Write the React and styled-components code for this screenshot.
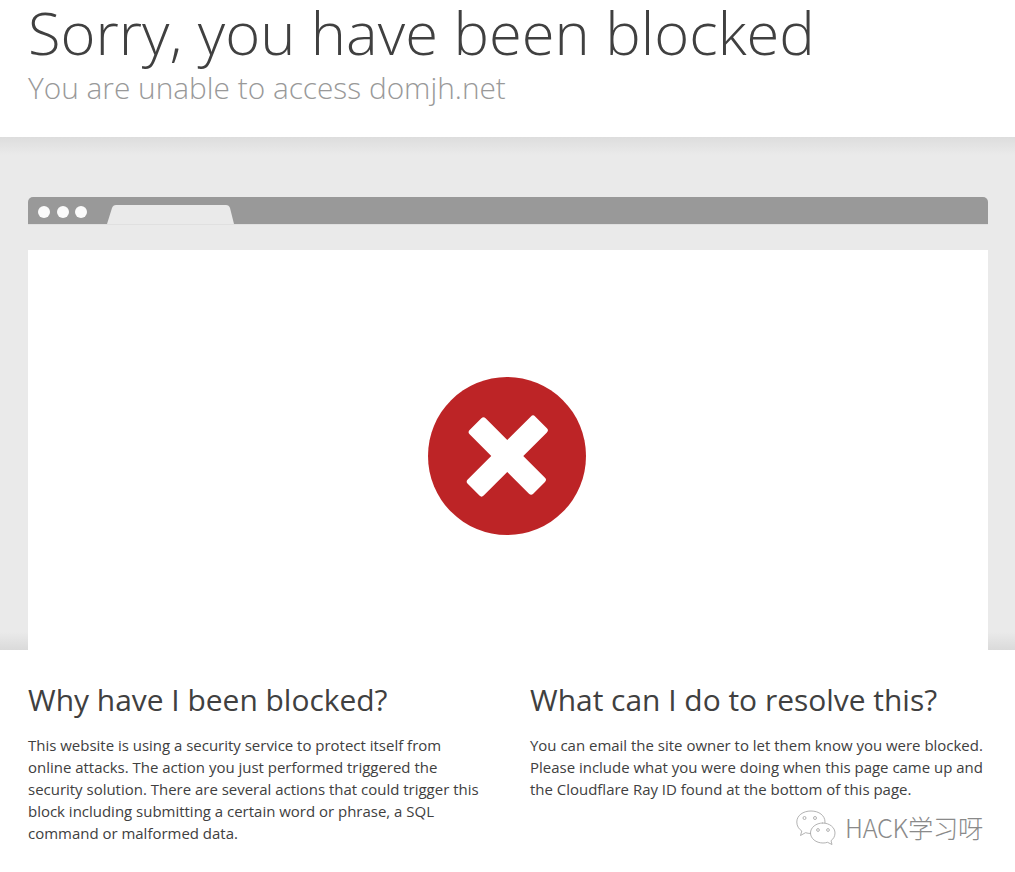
import React from "react";
import styled, { createGlobalStyle } from "styled-components";

const Global = createGlobalStyle`
  html, body { margin: 0; padding: 0; background: #fff; }
  body { font-family: "Open Sans", "Liberation Sans", sans-serif; color: #404040; overflow: hidden; }
`;
const Page = styled.div`
  position: relative;
  width: 1015px;
  height: 872px;
  overflow: hidden;
`;
const Header = styled.header`
  height: 137px;
  padding: 0 28px;
  box-sizing: border-box;
  background: #fff;
`;
const Title = styled.h1`
  margin: 0;
  font-size: 59.7px;
  line-height: 64px;
  font-weight: 300;
  color: #404040;
`;
const Subtitle = styled.h2`
  margin: 6px 0 0;
  font-size: 29.82px;
  line-height: 36px;
  font-weight: 300;
  color: #999;
`;
const Band = styled.section`
  height: 513px;
  padding: 60px 27px 0 28px;
  box-sizing: border-box;
  background:
    linear-gradient(#dddddd, #eaeaea 18px) top / 100% 24px no-repeat,
    linear-gradient(#eaeaea, #dadada) bottom / 100% 18px no-repeat,
    #eaeaea;
`;
const BrowserBar = styled.div`
  height: 27px;
  padding-left: 10px;
  display: flex;
  align-items: center;
  gap: 6.5px;
  background: #999;
  border-radius: 5px 5px 0 0;
  border-bottom: 1px solid #e0e0e0;
  margin-bottom: 25px;
`;
const Dot = styled.span`
  width: 12px;
  height: 12px;
  margin-top: 2px;
  border-radius: 50%;
  background: #fff;
  opacity: 0.96;
`;
const Tab = styled.svg`
  margin-left: 13.5px;
  align-self: flex-end;
  display: block;
`;
const Panel = styled.div`
  height: 400px;
  padding: 127px 2px 0 0;
  box-sizing: border-box;
  background: #fff;
  display: flex;
  justify-content: center;
  align-items: flex-start;
`;
const Columns = styled.section`
  display: grid;
  grid-template-columns: 452px 458px;
  column-gap: 50px;
  padding: 29px 28px 0;
`;
const Heading = styled.h2`
  margin: 0 0 13px;
  font-size: 29.95px;
  line-height: 42px;
  font-weight: 400;
  color: #404040;
`;
const Text = styled.p`
  margin: 0;
  font-size: 14.97px;
  line-height: 22px;
  font-weight: 400;
  color: #404040;
`;
const Watermark = styled.div`
  position: absolute;
  left: 796px;
  top: 807px;
  display: flex;
  align-items: center;
  gap: 9px;
  color: #8a8a8a;
  font-family: "Noto Sans CJK SC", "Open Sans", sans-serif;
  font-size: 25.3px;
  font-weight: 300;
  line-height: 40px;
  letter-spacing: -0.3px;
`;

function CrossIcon() {
  return (
    <svg width="158" height="158" viewBox="0 0 158 158" style={{ display: "block" }}>
      <circle cx="79" cy="79" r="79" fill="#bd2426" />
      <rect x="31.6" y="67.7" width="95.4" height="22.6" rx="3" fill="#fff" transform="rotate(-45 79.3 79)" />
      <rect x="34.3" y="67.7" width="90" height="22.6" rx="3" fill="#fff" transform="rotate(45 79.3 79)" />
    </svg>
  );
}

function WeChatIcon() {
  return (
    <svg width="40" height="35" viewBox="0 0 40 35" fill="#fff" stroke="#a0a0a0" strokeWidth="0.8">
      <path d="M15 1C7 1 .8 5.500 .8 12c0 4 2 7 5 9l-1.300 4.500 5-2.800c1.800.5 3.500.8 5.500.8 8 0 14-5 14-11.500S23 1 15 1z" />
      <path d="M27 13c-7 0-12.500 4.500-12.500 10S20 33 27 33c1.600 0 3-.2 4.500-.7l4.500 2.200-1-3.800c2.500-1.800 4-4.500 4-7.700 0-5.500-5.500-10-12.500-10z" />
      <circle cx="8.500" cy="8" r="1.500" />
      <circle cx="19" cy="8" r="1.500" />
      <circle cx="22" cy="20" r="1.400" />
      <circle cx="32" cy="20" r="1.400" />
    </svg>
  );
}

export default function App() {
  return (
    <Page>
      <Global />
      <Header>
        <Title>Sorry, you have been blocked</Title>
        <Subtitle>You are unable to access domjh.net</Subtitle>
      </Header>
      <Band>
        <BrowserBar>
          <Dot />
          <Dot />
          <Dot />
          <Tab width="127" height="19" viewBox="0 0 127 19">
            <path d="M0 19 L5 3 Q6 0 9 0 H119 Q122 0 123 3 L127 19 Z" fill="#eaeaea" />
          </Tab>
        </BrowserBar>
        <Panel>
          <CrossIcon />
        </Panel>
      </Band>
      <Columns>
        <div>
          <Heading>Why have I been blocked?</Heading>
          <Text>
            This website is using a security service to protect itself from online attacks. The action you just
            performed triggered the security solution. There are several actions that could trigger this block
            including submitting a certain word or phrase, a SQL command or malformed data.
          </Text>
        </div>
        <div>
          <Heading>What can I do to resolve this?</Heading>
          <Text>
            You can email the site owner to let them know you were blocked. Please include what you were doing when
            this page came up and the Cloudflare Ray ID found at the bottom of this page.
          </Text>
        </div>
      </Columns>
      <Watermark>
        <WeChatIcon />
        <span>HACK学习呀</span>
      </Watermark>
    </Page>
  );
}
